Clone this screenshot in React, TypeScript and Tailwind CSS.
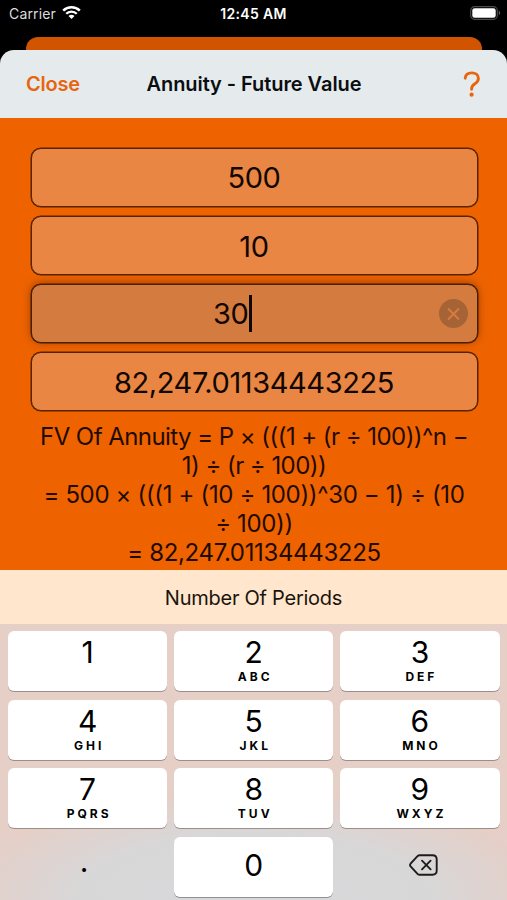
const keys = [
  { digit: "1", letters: "" },
  { digit: "2", letters: "ABC" },
  { digit: "3", letters: "DEF" },
  { digit: "4", letters: "GHI" },
  { digit: "5", letters: "JKL" },
  { digit: "6", letters: "MNO" },
  { digit: "7", letters: "PQRS" },
  { digit: "8", letters: "TUV" },
  { digit: "9", letters: "WXYZ" },
];

function StatusBar() {
  return (
    <div className="grid h-[37px] grid-cols-3 pt-[5px] text-[14px] leading-[18px] text-white">
      <div className="flex items-start pl-[9px]">
        <span className="tracking-[0.15px] text-[#dcdcdc]">Carrier</span>
        <svg className="ml-[6px]" width="19" height="15" viewBox="0 0 19 14" fill="none">
          <path d="M1.2 5.2a11.8 11.8 0 0 1 16.6 0" stroke="white" strokeWidth="2.5" />
          <path d="M4.2 8.3a7.5 7.5 0 0 1 10.6 0" stroke="white" strokeWidth="2.3" />
          <path d="M9.5 13.6 6.5 10.6a4.3 4.3 0 0 1 6 0Z" fill="white" />
        </svg>
      </div>
      <span className="text-center font-semibold tracking-[0.3px] whitespace-nowrap">12:45 AM</span>
      <div className="flex justify-end pr-[6px]">
        <svg className="mt-[1px]" width="31" height="14" viewBox="0 0 31 14">
          <rect x="0.7" y="0.7" width="26.6" height="12.6" rx="3.8" fill="none" stroke="#4c4c4c" strokeWidth="1.2" />
          <rect x="2.3" y="2.3" width="23.4" height="9.4" rx="2.3" fill="white" />
          <path d="M28.8 4.8c1.8.6 1.8 3.8 0 4.4Z" fill="#5c5c5c" />
        </svg>
      </div>
    </div>
  );
}

function Header() {
  return (
    <header className="relative -mr-[25px] -ml-[26px] grid h-[68px] grid-cols-[100px_1fr_100px] items-center rounded-t-[14px] bg-[#e5ebed]">
      <span className="pl-[26px] text-[20px] font-semibold tracking-[-0.2px] text-[#e8650f]">Close</span>
      <h1 className="pl-[1px] text-center text-[20px] font-semibold tracking-[-0.06px] whitespace-nowrap text-[#0a0e10]">
        Annuity - Future Value
      </h1>
      <svg className="mr-[26px] justify-self-end" width="18" height="26" viewBox="0 0 18 26" fill="none">
        <path
          d="M2.2 7.2C2.4 3.8 5 1.9 8.8 1.9c4 0 6.6 2.2 6.6 5.5 0 2.8-1.6 4.1-3.5 5.4-2.4 1.5-3.3 2.6-3.3 4.9v.5"
          stroke="#e8650f"
          strokeWidth="2.9"
          strokeLinecap="round"
        />
        <circle cx="8.6" cy="23.7" r="2.1" fill="#e8650f" />
      </svg>
    </header>
  );
}

function Field({ value }: { value: string }) {
  return (
    <div className="flex h-[59px] items-center justify-center rounded-[10px] border border-[#582300] bg-[#e98643] pt-[2px] text-[29px] tracking-[-0.4px] text-[#120600] shadow-[0_0_0_0.5px_#582300]">
      {value}
    </div>
  );
}

function ActiveField({ value }: { value: string }) {
  return (
    <div className="flex h-[59px] items-center rounded-[10px] border border-[#4a1e00] bg-[#d47c40] pr-[9px] text-[29px] tracking-[-0.4px] text-[#120600] shadow-[0_0_0_0.5px_#4a1e00,0_-1px_9px_rgba(90,30,0,0.55)]">
      <div className="flex flex-1 items-center justify-center pr-[5px]">
        <span className="pt-px">{value}</span>
        <span className="ml-px h-[37px] w-[2.5px] bg-[#120600]" />
      </div>
      <svg width="29" height="29" viewBox="0 0 29 29" fill="none">
        <circle cx="14.5" cy="14.5" r="14.5" fill="#a66335" />
        <path d="M9 9.5 20 20.5M20 9.5 9 20.5" stroke="#d47c40" strokeWidth="2" />
      </svg>
    </div>
  );
}

function Formula() {
  return (
    <div className="mt-[11px] text-center text-[24px] leading-[29px] tracking-[-0.55px] whitespace-nowrap text-[#1f0b00]">
      <p>FV Of Annuity = P × (((1 + (r ÷ 100))^n −</p>
      <p>1) ÷ (r ÷ 100))</p>
      <p className="tracking-[-0.35px]">= 500 × (((1 + (10 ÷ 100))^30 − 1) ÷ (10</p>
      <p className="tracking-[-0.35px]">÷ 100))</p>
      <p className="tracking-[-0.35px]">= 82,247.01134443225</p>
    </div>
  );
}

function Keypad() {
  return (
    <div className="grid flex-1 grid-cols-3 content-start gap-x-[7px] gap-y-[8.5px] bg-[radial-gradient(ellipse_58%_40%_at_50%_100%,#d8d8da_0%,#d8d7d8_60%,#e5cfc7_100%)] pt-[7px] pr-[7.5px] pl-[8px] text-black">
      {keys.map((key) => (
        <div
          key={key.digit}
          className="flex h-[60px] flex-col items-center rounded-[6px] bg-white pt-[4px] shadow-[0_1px_0_#9b8f8c]"
        >
          <span className="text-[30px] leading-[34px]">{key.digit}</span>
          <span className="pl-[3px] text-[12px] leading-[15px] font-bold tracking-[3px]">{key.letters}</span>
        </div>
      ))}
      <div className="flex h-[60px] items-center justify-center pr-[7px] pb-[12px]">
        <span className="text-[30px] leading-none">.</span>
      </div>
      <div className="flex h-[60px] items-center justify-center rounded-[6px] bg-white pb-[2px] text-[30px] shadow-[0_1px_0_#8f8f92]">
        0
      </div>
      <div className="flex h-[60px] items-center justify-center pb-[3px] pl-[8px]">
        <svg width="29" height="22" viewBox="0 0 29 22" fill="none" stroke="#1c1c1c" strokeWidth="1.9">
          <path d="M10.8 1.2h12.7c2.7 0 4.2 1.5 4.2 4.2v11.2c0 2.7-1.5 4.2-4.2 4.2H10.8c-1 0-1.6-.3-2.3-1L1.8 12.7c-1-1.1-1-2.3 0-3.4l6.7-7.1c.7-.7 1.3-1 2.3-1Z" />
          <path d="m13 6.7 8.6 8.6M21.6 6.7 13 15.3" strokeLinecap="round" />
        </svg>
      </div>
    </div>
  );
}

export default function App() {
  return (
    <div className="flex h-[900px] w-[507px] flex-col overflow-hidden bg-black font-[Inter,sans-serif]">
      <StatusBar />
      {/* Presenting screen peeking out behind the sheet */}
      <div className="mr-[25px] ml-[26px] rounded-t-[12px] bg-[#d15500] pt-[13px]">
        <Header />
      </div>
      <main className="h-[452px] bg-[#ee6300] pt-[29.5px] pr-[29.5px] pl-[30.5px]">
        <div className="flex flex-col gap-[9.3px]">
          <Field value="500" />
          <Field value="10" />
          <ActiveField value="30" />
          <Field value="82,247.01134443225" />
        </div>
        <Formula />
      </main>
      <div className="flex h-[54px] items-center justify-center bg-[#ffe6cd] pt-[2px] text-[20px] tracking-[-0.25px] text-[#1a140e]">
        Number Of Periods
      </div>
      <Keypad />
    </div>
  );
}
